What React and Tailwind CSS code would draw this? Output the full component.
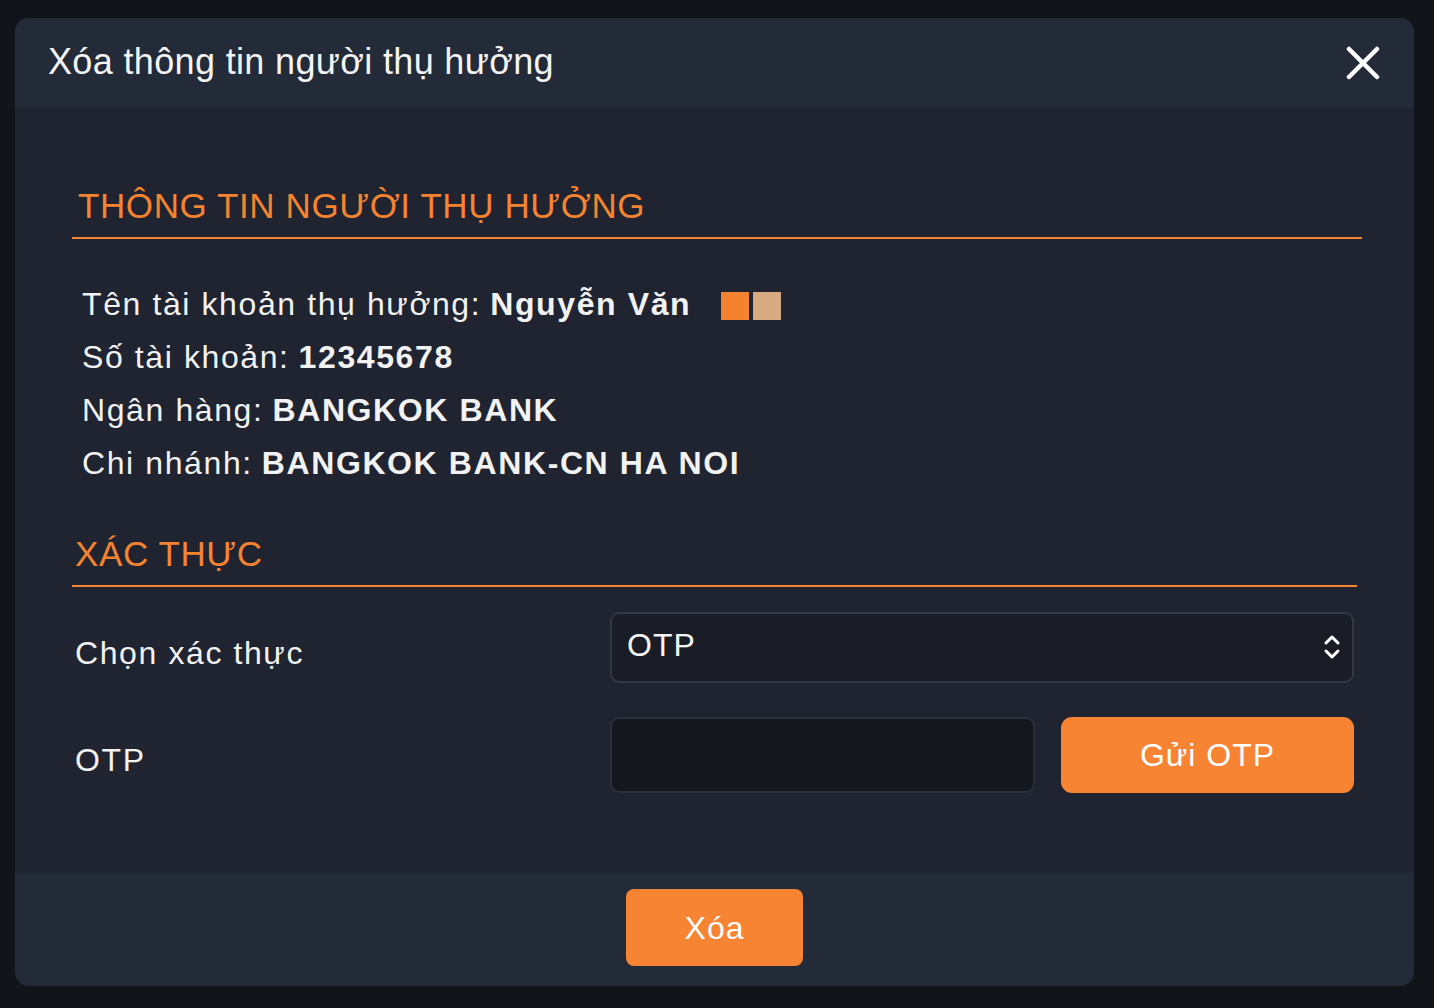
import React, { useState } from "react";

const font = { fontFamily: '"Liberation Sans", Arial, sans-serif' };

const InfoLine = ({ label, value, children }) => (
  <div className="flex items-center h-[53px] text-[32px] tracking-[1.6px] text-[#f2f2f2]">
    <span>{label}</span>
    <span className="ml-[9px] font-bold">{value}</span>
    {children}
  </div>
);

const SectionTitle = ({ children, className = "" }) => (
  <div
    className={`border-b-2 border-[#f5832f] pb-[10px] text-[35px] tracking-[0.6px] leading-[42px] text-[#f5832f] ${className}`}
  >
    {children}
  </div>
);

export default function App() {
  const [method, setMethod] = useState("OTP");
  const [otp, setOtp] = useState("");

  return (
    <div
      className="w-[1434px] h-[1008px] bg-[#111419] pt-[18px] pl-[15px] pr-[20px]"
      style={font}
    >
      <div className="h-[968px] rounded-[14px] overflow-hidden flex flex-col bg-[#1f2430]">
        {/* header */}
        <div className="h-[90px] shrink-0 bg-[#232a38] flex items-center justify-between pl-[33px] pr-[34px]">
          <h1 className="text-[36px] tracking-[0.35px] text-[#f4f4f4] leading-none pb-[2px]">
            Xóa thông tin người thụ hưởng
          </h1>
          <button className="w-[34px] h-[34px] flex items-center justify-center">
            <svg width="34" height="34" viewBox="0 0 34 34">
              <path
                d="M3 3 L31 31 M31 3 L3 31"
                stroke="#ffffff"
                strokeWidth="4.5"
                strokeLinecap="round"
              />
            </svg>
          </button>
        </div>

        {/* body */}
        <div className="flex-1 pt-[77px] pl-[57px] pr-[52px]">
          <SectionTitle className="pl-[6px]">THÔNG TIN NGƯỜI THỤ HƯỞNG</SectionTitle>

          <div className="mt-[38px] pl-[10px]">
            <InfoLine label="Tên tài khoản thụ hưởng:" value="Nguyễn Văn">
              <span className="ml-[30px] flex gap-[4px] mt-[4px]">
                <span className="w-[28px] h-[28px] bg-[#f5822e]" />
                <span className="w-[28px] h-[28px] bg-[#d9a981]" />
              </span>
            </InfoLine>
            <InfoLine label="Số tài khoản:" value="12345678" />
            <InfoLine label="Ngân hàng:" value="BANGKOK BANK" />
            <InfoLine label="Chi nhánh:" value="BANGKOK BANK-CN HA NOI" />
          </div>

          <SectionTitle className="mt-[44px] pl-[3px] mr-[5px]">
            XÁC THỰC
          </SectionTitle>

          <div className="mt-[25px] pl-[3px] pr-[8px] flex flex-col gap-[34px]">
            <div className="flex items-center">
              <div className="w-[535px] shrink-0 text-[32px] tracking-[1.6px] text-[#f2f2f2] pt-[10px]">
                Chọn xác thực
              </div>
              <div className="relative flex-1 min-w-0 h-[71px]">
                <select
                  value={method}
                  onChange={(e) => setMethod(e.target.value)}
                  className="appearance-none w-full h-full rounded-[9px] border-2 border-[#333846] bg-[#1a1d26] pl-[15px] pb-[6px] text-[32px] tracking-[1px] text-[#f4f4f4] outline-none"
                  style={font}
                >
                  <option value="OTP">OTP</option>
                </select>
                <svg
                  className="absolute right-[13px] top-[22px] pointer-events-none"
                  width="18"
                  height="26"
                  viewBox="0 0 18 26"
                >
                  <path
                    d="M3 9 L9 3 L15 9 M3 17 L9 23 L15 17"
                    fill="none"
                    stroke="#ffffff"
                    strokeWidth="3"
                    strokeLinecap="round"
                    strokeLinejoin="round"
                  />
                </svg>
              </div>
            </div>

            <div className="flex items-center">
              <div className="w-[535px] shrink-0 text-[32px] tracking-[1.6px] text-[#f2f2f2] pt-[10px]">
                OTP
              </div>
              <div className="flex-1 min-w-0 flex gap-[26px]">
                <input
                  value={otp}
                  onChange={(e) => setOtp(e.target.value)}
                  className="flex-1 w-0 min-w-0 h-[76px] rounded-[9px] border-2 border-[#2c303b] bg-[#14171e] px-[15px] text-[32px] text-white outline-none"
                  style={font}
                />
                <button className="w-[293px] shrink-0 h-[76px] rounded-[11px] bg-[#f78433] text-[32px] tracking-[1px] text-white">
                  Gửi OTP
                </button>
              </div>
            </div>
          </div>
        </div>

        {/* footer */}
        <div className="h-[113px] shrink-0 bg-[#232a38] flex justify-center pt-[16px]">
          <button className="w-[177px] h-[77px] rounded-[8px] bg-[#f78433] text-[32px] tracking-[1px] text-white">
            Xóa
          </button>
        </div>
      </div>
    </div>
  );
}
